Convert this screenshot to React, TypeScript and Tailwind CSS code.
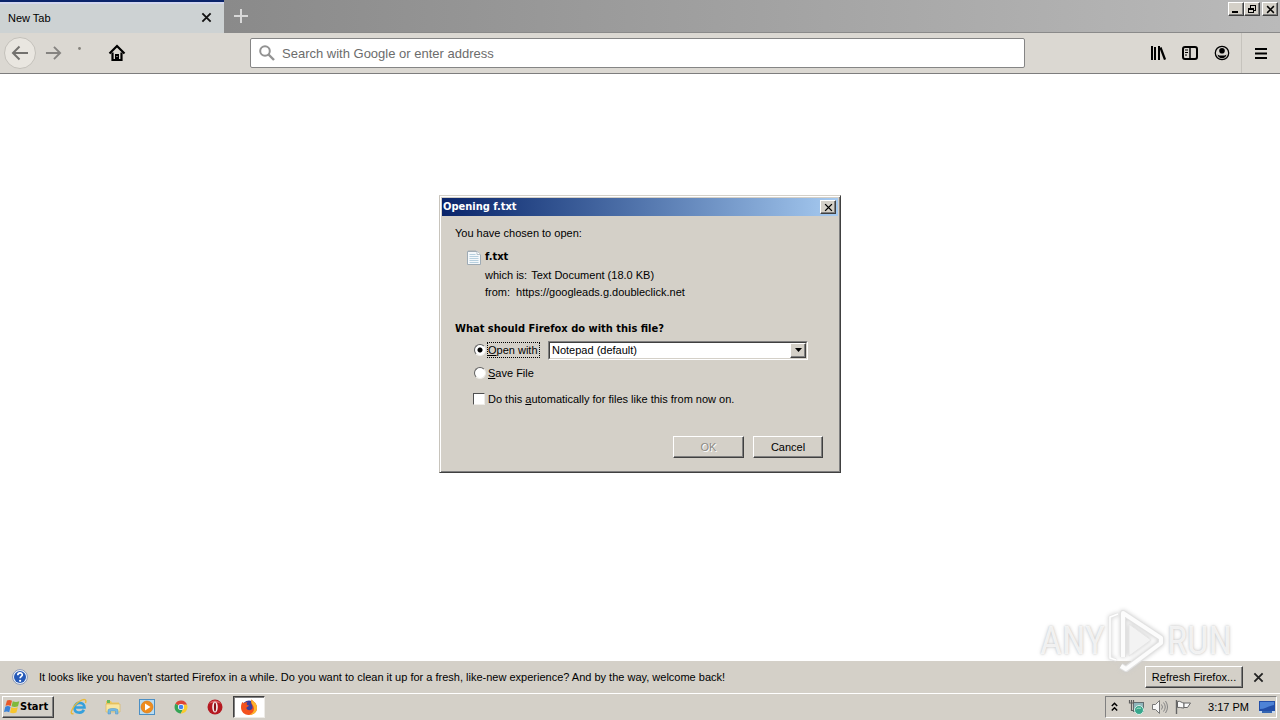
import React, { useState } from 'react'

const raised =
  'bg-[#d4d0c8] border border-t-white border-l-white border-r-[#404040] border-b-[#404040] shadow-[inset_-1px_-1px_0_#808080]'
const sunken = 'border border-t-[#808080] border-l-[#808080] border-r-white border-b-white'
const uiBold = "font-['DejaVu_Sans_Condensed','DejaVu_Sans',sans-serif] font-bold"

function CrossIcon({ size = 12, width = 2 }: { size?: number; width?: number }) {
  return (
    <svg width={size} height={size} viewBox="0 0 12 12" fill="none" stroke="currentColor" strokeWidth={width}>
      <path d="M1.5 1.5l9 9M10.5 1.5l-9 9" />
    </svg>
  )
}

function TabStrip() {
  return (
    <header className="flex h-[33px] bg-linear-to-r from-[#808080] to-[#bababa] border-b border-[#8a8a8a]">
      <div className="flex items-center justify-between w-56 h-[33px] pl-2 pr-3 bg-[#cdd2d3] border-t-2 border-[#0a246a] shadow-[inset_0_2px_0_#d3d7ee]">
        <span className="text-[11px]">New Tab</span>
        <button type="button" aria-label="Close tab" className="text-[#111]">
          <CrossIcon size={11} />
        </button>
      </div>
      <button type="button" aria-label="Open a new tab" className="flex items-center justify-center w-[34px] text-[#d8d8d8]">
        <svg width="14" height="14" viewBox="0 0 14 14" stroke="currentColor" strokeWidth="2">
          <path d="M7 0v14M0 7h14" />
        </svg>
      </button>
      <div className="flex ml-auto mt-0.5 mr-0.5 h-[14px]">
        <button type="button" aria-label="Minimize" className={`${raised} flex items-center justify-center w-4`}>
          <svg width="10" height="10" viewBox="0 0 10 10"><path d="M1 7h6v2H1z" /></svg>
        </button>
        <button type="button" aria-label="Restore" className={`${raised} flex items-center justify-center w-4`}>
          <svg width="10" height="10" viewBox="0 0 10 10" fill="none" stroke="#000" shapeRendering="crispEdges">
            <path d="M3.500 4V1.500h5v5H7M3 1.500h6M1.500 4.500h5v4h-5zM1 5h6" />
            <path d="M3 1h6v1H3zM1 4h6v1H1z" fill="#000" stroke="none" />
          </svg>
        </button>
        <button type="button" aria-label="Close window" className={`${raised} flex items-center justify-center w-4 ml-0.5`}>
          <CrossIcon size={9} width={2} />
        </button>
      </div>
    </header>
  )
}

function Toolbar() {
  return (
    <nav className="flex items-center h-[41px] bg-[#dbd8d2] border-b border-[#7d7d7d]">
      <div className="flex items-center w-[250px] pl-1">
        <button type="button" aria-label="Back" className="flex items-center justify-center size-8 rounded-full bg-[#e9e6e0] border border-[#c4c1bb] text-[#73716e]">
          <svg width="18" height="16" viewBox="0 0 18 16" fill="none" stroke="currentColor" strokeWidth="2">
            <path d="M17 8H2M8.500 1.500L2 8l6.500 6.500" />
          </svg>
        </button>
        <button type="button" aria-label="Forward" className="flex items-center justify-center w-8 ml-px text-[#858380]">
          <svg width="17" height="16" viewBox="0 0 18 16" fill="none" stroke="currentColor" strokeWidth="2">
            <path d="M1 8h15M9.500 1.500L16 8l-6.500 6.500" />
          </svg>
        </button>
        <button type="button" aria-label="Reload" className="flex justify-center w-5 h-3 text-[#85827c]">
          <svg width="3" height="3"><circle cx="1.500" cy="1.500" r="1.400" fill="currentColor" /></svg>
        </button>
        <button type="button" aria-label="Home" className="ml-[19px]">
          <svg width="18" height="18" viewBox="0 0 18 18">
            <path d="M1.500 9.500L9 2l7.500 7.500" fill="none" stroke="#000" strokeWidth="2.200" />
            <path d="M4.500 8.500V16h9V8.500" fill="none" stroke="#000" strokeWidth="2.200" />
            <path d="M7 10h4v6H7z" />
            <path d="M8.500 12h1v1h-1z" fill="#dbd8d2" />
          </svg>
        </button>
      </div>
      <label className="flex flex-1 items-center h-[30px] pl-2 gap-[7px] bg-white border border-[#858585] rounded-xs">
        <svg width="16" height="16" viewBox="0 0 16 16" fill="none" stroke="#929292" strokeWidth="2">
          <circle cx="6" cy="6" r="4.800" />
          <path d="M9.500 9.500L15 15" strokeWidth="2.400" />
        </svg>
        <input
          type="text"
          aria-label="Search with Google or enter address"
          placeholder="Search with Google or enter address"
          className="flex-1 pt-0.5 text-[13px] outline-none placeholder:text-[#6c6c6c]"
        />
      </label>
      <div className="flex items-center justify-end w-[255px] h-full pr-[11px]">
        <button type="button" aria-label="Library" className="flex justify-center w-8">
          <svg width="16" height="16" viewBox="0 0 16 16" fill="none" stroke="#000" strokeWidth="2">
            <path d="M2 1v14M5 2v13M9 1v14" strokeWidth="2" />
            <path d="M10.500 2.500L15 14.500" strokeWidth="2.200" />
          </svg>
        </button>
        <button type="button" aria-label="Sidebars" className="flex justify-center w-8">
          <svg width="16" height="16" viewBox="0 0 16 16" fill="none" stroke="#000">
            <rect x="1" y="2" width="14" height="12" rx="2" strokeWidth="2" />
            <path d="M8 2v12" strokeWidth="1.500" />
            <path d="M3 5h3M3 7.500h3M3 10h2" />
          </svg>
        </button>
        <button type="button" aria-label="Account" className="flex justify-center w-8 mr-[3px]">
          <svg width="16" height="16" viewBox="0 0 16 16">
            <circle cx="8" cy="8" r="6.700" fill="none" stroke="#000" strokeWidth="1.300" />
            <circle cx="8" cy="5.800" r="2.800" />
            <path d="M3.500 9.500c1 1 2.500 1 4.500 1s3.500 0 4.500-1c-.5 2.500-2.300 3.800-4.500 3.800s-4-1.300-4.500-3.800z" />
          </svg>
        </button>
        <div className="flex items-center h-full pl-3 border-l border-[#c6c3bd]">
          <button type="button" aria-label="Menu">
            <svg width="15" height="13" viewBox="0 0 15 13" stroke="#000" strokeWidth="2">
              <path d="M1 2h12M1 6.500h12M1 11h12" />
            </svg>
          </button>
        </div>
      </div>
    </nav>
  )
}

function TextFileIcon() {
  return (
    <svg width="14" height="16" viewBox="0 0 14 16">
      <path d="M.5 2.500h9.500l3.500 3v10H.5z" fill="#f4f8fb" stroke="#9eabb5" />
      <path d="M10 2.500v3h3.500" fill="#fff" stroke="#b4c0c8" />
      <path d="M2.500 5.500h6M2.500 7.500h9M2.500 9.500h9M2.500 11.500h9M2.500 13.500h9" stroke="#b7d0df" />
      <path d="M2 1v2M4 1v2M6 1v2M8 1v2" stroke="#a4acb2" />
    </svg>
  )
}

function OpenFileDialog() {
  const [action, setAction] = useState('open')
  const [remember, setRemember] = useState(false)
  const radio =
    'appearance-none size-3 rounded-full bg-white border border-t-[#606060] border-l-[#606060] border-r-[#eeece8] border-b-[#eeece8] checked:bg-[radial-gradient(circle,#000_2px,#fff_3px)]'

  return (
    <section
      role="dialog"
      aria-labelledby="dialog-title"
      className="w-[402px] p-0.5 bg-[#d4d0c8] border border-t-[#d4d0c8] border-l-[#c8c4bc] border-r-[#404040] border-b-[#404040] shadow-[inset_1px_1px_0_#fff,inset_-1px_-1px_0_#808080]"
    >
      <div className="flex items-center justify-between h-[18px] pl-px pr-0.5 bg-linear-to-r from-[#0a246a] to-[#a6caf0]">
        <h1 id="dialog-title" className={`${uiBold} text-white`}>Opening f.txt</h1>
        <button type="button" aria-label="Close" className={`${raised} flex items-center justify-center w-4 h-[14px]`}>
          <CrossIcon size={9} width={1.8} />
        </button>
      </div>

      <form className="pt-[9px] pl-[13px] pr-[15px] pb-3" onSubmit={(e) => e.preventDefault()}>
        <p>You have chosen to open:</p>
        <div className="flex gap-1 mt-2 pl-3">
          <TextFileIcon />
          <div>
            <p className={uiBold}>f.txt</p>
            <p className="flex gap-1 mt-0.5"><span>which is:</span><span>Text Document (18.0 KB)</span></p>
            <p className="flex gap-1.5 mt-px"><span>from:</span><span>https://googleads.g.doubleclick.net</span></p>
          </div>
        </div>

        <h2 className={`${uiBold} mt-[21px]`}>What should Firefox do with this file?</h2>
        <div className="flex items-center h-5 mt-[3px] pl-[19px]">
          <input id="open-with" type="radio" name="action" className={radio} checked={action === 'open'} onChange={() => setAction('open')} />
          <label htmlFor="open-with" className="w-[53px] h-4 pl-px ml-px mr-2 whitespace-nowrap outline outline-dotted -outline-offset-1 outline-black">
            <u>O</u>pen with
          </label>
          <div className={`${sunken} relative w-[260px] h-[19px]`}>
            <select
              aria-label="Application"
              className="block appearance-none w-full h-[17px] pl-0.5 leading-[14px] bg-white border border-t-[#404040] border-l-[#404040] border-r-[#d4d0c8] border-b-[#d4d0c8] outline-none"
            >
              <option>Notepad (default)</option>
            </select>
            <span className={`${raised} pointer-events-none absolute right-px top-px flex items-center justify-center w-4 h-[15px]`}>
              <svg width="7" height="4" viewBox="0 0 7 4"><path d="M0 0h7L3.500 4z" /></svg>
            </span>
          </div>
        </div>
        <div className="flex items-center gap-0.5 mt-[5px] pl-[19px]">
          <input id="save-file" type="radio" name="action" className={radio} checked={action === 'save'} onChange={() => setAction('save')} />
          <label htmlFor="save-file"><u>S</u>ave File</label>
        </div>
        <div className="flex items-center gap-[3px] mt-2.5 pl-[18px]">
          <input
            id="remember"
            type="checkbox"
            checked={remember}
            onChange={(e) => setRemember(e.target.checked)}
            className="appearance-none size-3 bg-white border border-t-[#505050] border-l-[#505050] border-r-[#eeece8] border-b-[#eeece8] checked:bg-black"
          />
          <label htmlFor="remember">Do this <u>a</u>utomatically for files like this from now on.</label>
        </div>

        <div className="flex justify-end gap-[9px] mt-[29px]">
          <button type="submit" disabled className={`${raised} w-[71px] h-[22px] text-[#8c8a85] [text-shadow:1px_1px_0_#fff]`}>OK</button>
          <button type="button" className={`${raised} w-[70px] h-[22px]`}>Cancel</button>
        </div>
      </form>
    </section>
  )
}

function Watermark() {
  const word =
    "font-['Roboto_Condensed','Roboto',sans-serif] text-[38px] leading-10 text-white/75 [text-shadow:0_0_2px_#c4c4c4,0_0_4px_#dadada]"
  return (
    <div className="pointer-events-none absolute right-12 bottom-[46px] flex items-center gap-0.5" aria-hidden="true">
      <span className={word}>ANY</span>
      <svg width="58" height="66" viewBox="0 0 56 66" fill="none" className="drop-shadow-[0_0_2px_#cccccc]">
        <path d="M10 6L2 9v41l6 2" stroke="#e6e6e6" strokeWidth="3" />
        <path d="M10 6L2 9v41l6 2" stroke="#fff" strokeWidth="1.500" />
        <path d="M15 49V5l38 25v5L18 61l-5-3" stroke="#e2e2e2" strokeWidth="6" strokeLinejoin="round" />
        <path d="M15 49V5l38 25v5L18 61l-5-3" stroke="#fcfcfc" strokeWidth="4" strokeLinejoin="round" />
        <path d="M21 48V16l22 16z" fill="#f3f3f3" stroke="#e6e6e6" />
      </svg>
      <span className={word}>RUN</span>
    </div>
  )
}

function NotificationBar() {
  return (
    <aside className="flex items-center h-8 pl-3 pr-4 bg-[#d4d0c8]">
      <svg width="16" height="16" viewBox="0 0 16 16">
        <circle cx="8" cy="8" r="7.400" fill="#f4f7fc" stroke="#8796b5" />
        <circle cx="8" cy="8" r="6" fill="#2559b8" />
        <path d="M5.800 6.200c0-3 4.500-3 4.500-.3 0 1.500-2.200 1.600-2.200 3.400" fill="none" stroke="#fff" strokeWidth="1.700" />
        <circle cx="8.100" cy="11.800" r="1.100" fill="#fff" />
      </svg>
      <p className="ml-[11px] mr-auto">
        It looks like you haven't started Firefox in a while. Do you want to clean it up for a fresh, like-new experience? And by the way, welcome back!
      </p>
      <button type="button" className={`${raised} w-[98px] h-[22px]`}>R<u>e</u>fresh Firefox...</button>
      <button type="button" aria-label="Dismiss" className="ml-2.5 text-[#222]"><CrossIcon size={11} /></button>
    </aside>
  )
}

function WindowsFlag() {
  return (
    <svg width="16" height="16" viewBox="0 0 16 16">
      <path d="M3 1.500C4.800.5 6.300.800 8 1.800L6.700 7C5 6 3.500 6 1.500 6.800z" fill="#e8592a" />
      <path d="M8.800 2.200c2 1 4.200 1 6.500 0L14 7.300c-2.200 1-4.500 1-6.500 0z" fill="#7fb93c" />
      <path d="M1.300 7.700c1.900-.8 3.500-.8 5.200.2L5.200 13.200C3.500 12.200 2 12.200 0 13z" fill="#3a82d8" />
      <path d="M7.300 8.300c2 1 4.200 1 6.500 0l-1.400 5.200c-2.200 1-4.400 1-6.400 0z" fill="#f7c52d" />
    </svg>
  )
}

const launchers = [
  {
    name: 'Internet Explorer',
    icon: (
      <svg width="18" height="18" viewBox="0 0 18 18" fill="none">
        <path d="M4.500 9.500h10c0-6-9.500-6.500-10 .2-.2 5.800 7.500 6.500 9.300 2" stroke="#35a0dc" strokeWidth="2.600" />
        <path d="M3.500 15.500c-5 2-1-8 6.500-12.500 4-2.400 7-2 5.500 2" stroke="#e8b93a" strokeWidth="1.400" />
      </svg>
    ),
  },
  {
    name: 'Windows Explorer',
    icon: (
      <svg width="18" height="18" viewBox="0 0 18 18">
        <path d="M2 3h5l1 1.500h7V14H2z" fill="#edc75e" />
        <path d="M3 2h3v3H3z" fill="#67b85c" />
        <path d="M2 6h14v8H2z" fill="#f8e6a0" stroke="#d9b452" strokeWidth=".6" />
        <path d="M4 16v-4c0-2 10-2 10 0v4h-2.500v-3h-5v3z" fill="#75b9e4" stroke="#4b91c5" strokeWidth=".5" />
      </svg>
    ),
  },
  {
    name: 'Windows Media Player',
    icon: (
      <svg width="18" height="18" viewBox="0 0 18 18">
        <rect x="1.500" y="1.500" width="15" height="15" fill="#b9dcf2" stroke="#4c8fc4" />
        <circle cx="9" cy="9" r="6" fill="#ef8c1e" stroke="#d8740c" strokeWidth=".6" />
        <path d="M7 5.500L12.500 9 7 12.500z" fill="#fff" />
      </svg>
    ),
  },
  {
    name: 'Chrome',
    icon: (
      <svg width="14" height="14" viewBox="0 0 16 16">
        <path d="M8 8L1.600 4.300A7.400 7.400 0 0 1 14.900 5.300H8z" fill="#de4436" />
        <path d="M8 8l3 1.500-3.200 5.900A7.400 7.400 0 0 1 1.600 4.300z" fill="#35a455" />
        <path d="M8 5.300h6.900a7.400 7.400 0 0 1-7.100 10.100L11 9z" fill="#f9cb2d" />
        <circle cx="8" cy="8" r="3.500" fill="#fff" />
        <circle cx="8" cy="8" r="2.700" fill="#4483ee" />
      </svg>
    ),
  },
  {
    name: 'Opera',
    icon: (
      <svg width="16" height="16" viewBox="0 0 16 16">
        <circle cx="8" cy="8" r="7.500" fill="#b51820" />
        <path d="M2 5a7 7 0 0 1 12 0c-3-2-9-2-12 0z" fill="#dc5c60" />
        <ellipse cx="8" cy="8" rx="2.800" ry="5.500" fill="#f4eeee" />
        <ellipse cx="8" cy="8" rx="1.100" ry="4.500" fill="#8a1016" />
      </svg>
    ),
  },
]

function FirefoxIcon() {
  return (
    <svg width="18" height="18" viewBox="0 0 18 18">
      <circle cx="9" cy="9.500" r="7" fill="#3b3f9e" />
      <path d="M2.300 4l1.500 1.300C5 4 6.500 4 7.500 4.500 6 6 6.500 7 9 7.500c-.5 1.500-3 1.300-2.500 3 1 2.500 5.500 2 6-.5.5-3-2.500-4-1-8.500 1.500 2 5.500 3.500 5.500 8.500 0 4-3.500 7-8 7s-8-3-8-7.500C1 7 1.500 5.500 2.300 4z" fill="#f4511e" />
      <path d="M11.500 1.500c1.500 2 5.500 3.500 5.500 8.500 0 4-3.500 7-8 7 3-1.500 5-3 5-6.500 0-3.500-4-5-2.500-9z" fill="#fdb62b" />
    </svg>
  )
}

function Tray() {
  return (
    <div className={`${sunken} flex items-center h-[22px] pl-[5px] pr-px`}>
      <button type="button" aria-label="Show hidden icons">
        <svg width="7" height="10" viewBox="0 0 7 10" fill="none" stroke="#000" strokeWidth="1.500">
          <path d="M.8 4l2.700-2.700L6.200 4M.8 8.500l2.700-2.700 2.700 2.700" />
        </svg>
      </button>
      <svg className="ml-2.5" width="17" height="17" viewBox="0 0 17 17" fill="none">
        <rect x="5.500" y="3.500" width="10" height="9" fill="#8fb6bc" stroke="#626d70" />
        <path d="M1.500 1v3h4V1M3.500 1v10.500h3" stroke="#5e5e5e" strokeWidth="1.200" />
        <circle cx="11" cy="11" r="4.500" fill="#38a78c" stroke="#dff0ea" />
        <path d="M8.500 10c2-2 3 0 4.500-1" stroke="#b5e5d4" />
      </svg>
      <svg className="ml-1.5" width="18" height="16" viewBox="0 0 18 16" fill="none">
        <path d="M1.500 5.500h3l4-4v13l-4-4h-3z" fill="#f7f7f7" stroke="#777" />
        <path d="M10.500 5.500q2 2.500 0 5M12.500 3.500q3.500 4.500 0 9M14.500 2q4 6 0 12" stroke="#858585" />
      </svg>
      <svg className="ml-1.5" width="17" height="16" viewBox="0 0 17 16" fill="none" stroke="#666">
        <path d="M2.500 2.500c3-1 4 1.500 6.500 1.500V9c-3 0-4-1-6.500-.5z" fill="#fafafa" />
        <path d="M9 4h6.500l-3 4.500H9z" fill="#fafafa" />
        <path d="M1.500 1v14" strokeWidth="1.400" />
      </svg>
      <time className="ml-4">3:17 PM</time>
      <svg className="ml-2.5" width="16" height="14" viewBox="0 0 16 14">
        <path d="M0 1h16v10H0z" fill="#234fa8" />
        <path d="M1 2h14v3C9 6 6 9 1 9z" fill="#4d83d6" />
        <path d="M0 11h16v2H0z" fill="#c4d7ef" />
        <path d="M3 11h10v2H3z" fill="#3566b2" />
      </svg>
    </div>
  )
}

function Taskbar() {
  return (
    <footer className="flex items-center h-[27px] pl-0.5 pr-[3px] bg-[#d4d0c8] border-t border-white">
      <button type="button" className={`${raised} ${uiBold} flex items-center w-[52px] h-[22px] pl-px`}>
        <WindowsFlag />Start
      </button>
      <div className="flex items-center ml-2 mr-px">
        {launchers.map(({ name, icon }) => (
          <button key={name} type="button" aria-label={name} className="flex items-center justify-center w-[34px]">
            {icon}
          </button>
        ))}
      </div>
      <button
        type="button"
        aria-label="Firefox"
        className="flex items-center justify-center w-8 h-[22px] bg-white border border-t-[#404040] border-l-[#404040] border-r-[#eeece8] border-b-[#eeece8] shadow-[inset_1px_1px_0_#808080]"
      >
        <FirefoxIcon />
      </button>
      <div className="ml-auto"><Tray /></div>
    </footer>
  )
}

export default function App() {
  return (
    <div className="relative flex flex-col min-h-screen bg-white font-['Liberation_Sans',Arial,sans-serif] text-[11px] leading-4 text-black">
      <TabStrip />
      <Toolbar />
      <main className="flex flex-1 items-start justify-center pt-[121px]">
        <OpenFileDialog />
      </main>
      <NotificationBar />
      <Taskbar />
      <Watermark />
    </div>
  )
}
